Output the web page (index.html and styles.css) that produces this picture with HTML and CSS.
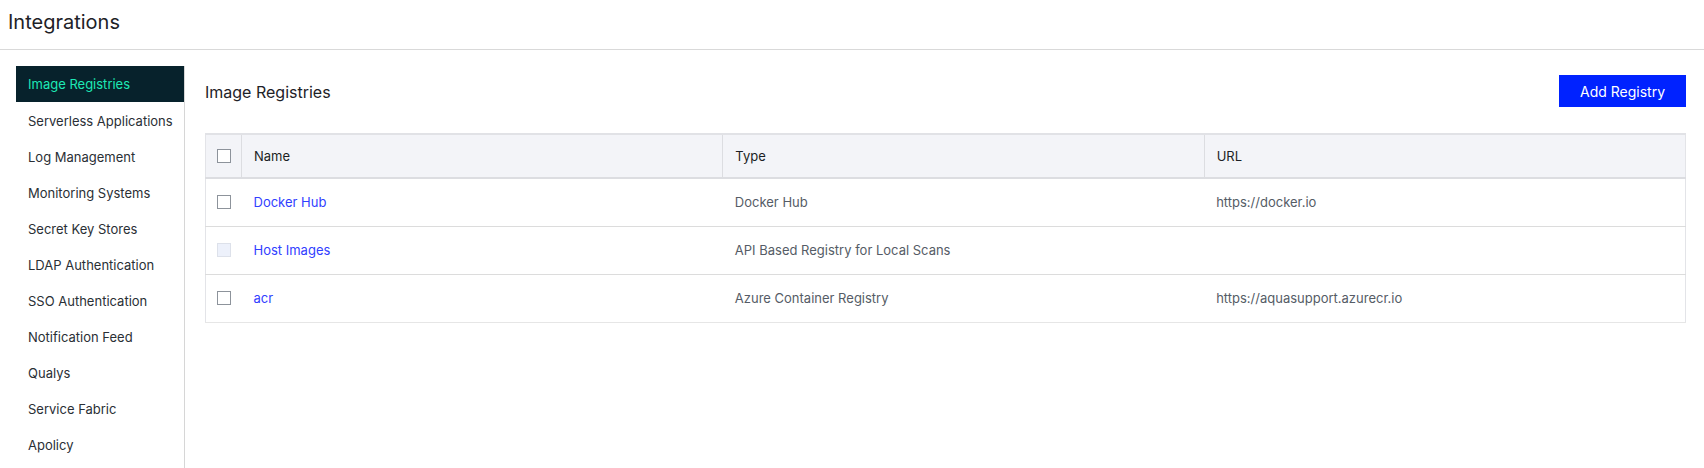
FILE: index.html
```html
<!DOCTYPE html>
<html>
<head>
<meta charset="utf-8">
<link rel="stylesheet" href="styles.css">
</head>
<body>
<header class="page-header"><h1 class="page-title">Integrations</h1></header>
<div class="layout">
  <nav class="sidebar">
    <a class="nav-item active">Image Registries</a>
    <a class="nav-item">Serverless Applications</a>
    <a class="nav-item">Log Management</a>
    <a class="nav-item">Monitoring Systems</a>
    <a class="nav-item">Secret Key Stores</a>
    <a class="nav-item">LDAP Authentication</a>
    <a class="nav-item">SSO Authentication</a>
    <a class="nav-item">Notification Feed</a>
    <a class="nav-item">Qualys</a>
    <a class="nav-item">Service Fabric</a>
    <a class="nav-item">Apolicy</a>
  </nav>
  <main class="content">
    <div class="toolbar">
      <h2 class="section-title">Image Registries</h2>
      <button class="btn-primary">Add Registry</button>
    </div>
    <table class="grid">
      <colgroup>
        <col class="c-check"><col><col><col>
      </colgroup>
      <thead>
        <tr>
          <th class="cell-check"><span class="checkbox"></span></th>
          <th>Name</th>
          <th>Type</th>
          <th>URL</th>
        </tr>
      </thead>
      <tbody>
        <tr>
          <td class="cell-check"><span class="checkbox"></span></td>
          <td><a class="link">Docker Hub</a></td>
          <td>Docker Hub</td>
          <td>https://docker.io</td>
        </tr>
        <tr>
          <td class="cell-check"><span class="checkbox disabled"></span></td>
          <td><a class="link">Host Images</a></td>
          <td>API Based Registry for Local Scans</td>
          <td></td>
        </tr>
        <tr>
          <td class="cell-check"><span class="checkbox"></span></td>
          <td><a class="link">acr</a></td>
          <td>Azure Container Registry</td>
          <td>https://aquasupport.azurecr.io</td>
        </tr>
      </tbody>
    </table>
  </main>
</div>
</body>
</html>
```
FILE: styles.css
```css
* { box-sizing: border-box; }
html, body { margin: 0; padding: 0; background: #fff; }
body {
  font-family: Inter, "Noto Sans", "Liberation Sans", sans-serif;
  color: #1b1f24;
  height: 468px;
  overflow: hidden;
}
.page-header {
  height: 50px;
  border-bottom: 1px solid #d9d9d9;
  padding: 10px 0 0 8px;
}
.page-title {
  margin: 0;
  font-size: 20px;
  font-weight: 400;
  line-height: 24px;
  color: #1e2227;
}
.layout {
  display: flex;
  height: 418px;
}
.sidebar {
  margin: 16px 0 0 16px;
  width: 169px;
  border-right: 1px solid #d6d6d6;
  display: flex;
  flex-direction: column;
  flex-shrink: 0;
}
.nav-item {
  display: block;
  height: 36px;
  line-height: 38px;
  padding-left: 12px;
  font-size: 13px;
  color: #2a2f35;
  white-space: nowrap;
}
.nav-item.active {
  background: #07222c;
  color: #1de9b6;
  width: 168px;
  line-height: 37px;
}
.content {
  flex: 1;
  padding: 25px 18px 0 20px;
}
.toolbar {
  display: flex;
  justify-content: space-between;
  align-items: flex-start;
  height: 58px;
}
.section-title {
  margin: 7px 0 0 0;
  font-size: 16px;
  font-weight: 400;
  line-height: 20px;
  color: #1e2227;
}
.btn-primary {
  width: 127px;
  height: 32px;
  background: #0022ff;
  border: none;
  color: #fff;
  font-family: inherit;
  font-size: 14px;
  padding: 0;
}
.grid {
  width: 100%;
  border-collapse: collapse;
  table-layout: fixed;
  border: 1px solid #e3e4e8;
}
.c-check { width: 36px; }
.grid th {
  background: #f3f4f8;
  height: 44px;
  text-align: left;
  font-weight: 400;
  font-size: 13px;
  color: #1b1f24;
  padding: 0 12px;
  border-top: 2px solid #e1e2e6;
  border-bottom: 2px solid #dcdde1;
  border-right: 1px solid #dcdde1;
}
.grid th:last-child { border-right: none; }
.grid td {
  height: 48px;
  font-size: 13px;
  color: #555c66;
  padding: 0 12px;
  border-bottom: 1px solid #dcdcdc;
}
.grid tbody tr:last-child td { border-bottom: 1px solid #e6e6e6; }
.grid .cell-check { padding: 0 0 0 11px; }
.checkbox {
  display: block;
  width: 14px;
  height: 14px;
  border: 1px solid #8d939b;
  background: #fff;
}
.checkbox.disabled {
  border-color: #dde1ea;
  background: #edf1fb;
}
.link {
  color: #3140ff;
}
```
